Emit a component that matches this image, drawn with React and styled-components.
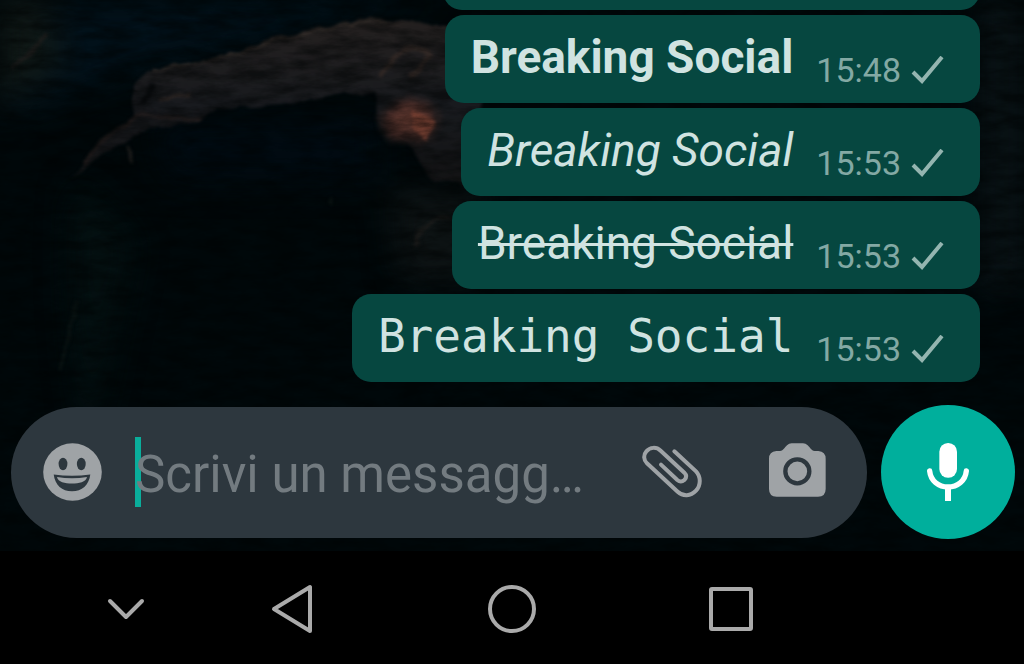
import React from 'react';
import styled, { createGlobalStyle } from 'styled-components';

const GlobalStyle = createGlobalStyle`
  *, *::before, *::after { box-sizing: border-box; }
  html, body { margin: 0; background: #000; }
  body, button, input { font-family: Roboto, "Liberation Sans", sans-serif; }
`;

const Screen = styled.div`
  display: flex;
  flex-direction: column;
  height: 100vh;
  overflow: hidden;
  background: #000;
`;

const Chat = styled.main`
  position: relative;
  isolation: isolate;
  display: flex;
  flex-direction: column;
  flex: 1;
  min-height: 0;
  background: #000a0c;
`;

const WallpaperArt = styled.svg`
  position: absolute;
  inset: 0;
  z-index: -1;
  width: 100%;
  height: 100%;
`;

const Messages = styled.section`
  display: flex;
  flex: 1;
  flex-direction: column;
  align-items: flex-end;
  justify-content: flex-end;
  gap: 5px;
  min-height: 0;
  padding: 0 44px;
  overflow: hidden;
`;

const Bubble = styled.article`
  display: flex;
  flex-shrink: 0;
  align-items: flex-start;
  gap: 23px;
  min-height: 88px;
  padding: 15px 36px 13px 26px;
  border-radius: 19px;
  background: #064740;
`;

const EarlierBubble = styled(Bubble)`
  width: 537px;
`;

const MessageText = styled.span`
  color: #d0e3e1;
  font-family: ${(p) => (p.$mono ? '"DejaVu Sans Mono", monospace' : 'inherit')};
  font-size: 46px;
  font-style: ${(p) => (p.$italic ? 'italic' : 'normal')};
  font-weight: ${(p) => (p.$bold ? 700 : 400)};
  line-height: 54px;
  text-decoration: ${(p) => (p.$strike ? 'line-through' : 'none')};
  text-decoration-thickness: 3px;
  white-space: nowrap;
`;

const Meta = styled.span`
  display: flex;
  align-items: center;
  align-self: flex-end;
  gap: 10px;
  color: #83a9a4;
  font-size: 34px;
  line-height: 40px;
`;

const Composer = styled.form`
  display: flex;
  align-items: center;
  gap: 14px;
  padding: 23px 9px 12px 11px;
`;

const InputPill = styled.div`
  display: flex;
  flex: 1;
  align-items: center;
  min-width: 0;
  height: 131px;
  padding: 0 41px 0 32px;
  border-radius: 66px;
  background: #2d373e;
`;

const IconButton = styled.button`
  display: grid;
  flex-shrink: 0;
  place-items: center;
  padding: 0;
  border: 0;
  background: none;
  color: ${(p) => p.$tint || '#9fa3a6'};
`;

const Field = styled.label`
  position: relative;
  display: flex;
  flex: 1;
  align-items: center;
  min-width: 0;
  height: 70px;
  margin: 0 34px 0 33px;
`;

const Caret = styled.span`
  position: absolute;
  left: 0;
  width: 6px;
  height: 70px;
  background: #0aad9b;
`;

const MessageInput = styled.input`
  position: relative;
  width: 100%;
  height: 66px;
  padding: 4px 0 0;
  border: 0;
  outline: 0;
  background: transparent;
  color: #d0e3e1;
  font-size: 51px;
  text-overflow: ellipsis;
  &::placeholder { color: #737b80; opacity: 1; }
`;

const Actions = styled.div`
  display: flex;
  align-items: center;
  gap: 67px;
`;

const MicButton = styled(IconButton)`
  width: 134px;
  height: 134px;
  border-radius: 50%;
  background: #00af9c;
`;

const NavBar = styled.nav`
  display: grid;
  grid-template-columns: 68fr 115fr 219fr 219fr 219fr 184fr;
  height: 113px;
  padding-top: 3px;
  background: #000;
`;

const NavButton = styled(IconButton)`
  &:first-child { grid-column: 2; }
`;

const messages = [
  { time: '15:48', bold: true },
  { time: '15:53', italic: true },
  { time: '15:53', strike: true },
  { time: '15:53', mono: true },
];

function Wallpaper() {
  return (
    <WallpaperArt viewBox="0 0 1024 551" preserveAspectRatio="xMidYMid slice" aria-hidden="true">
      <defs>
        <filter id="rough" x="-10%" y="-10%" width="120%" height="120%" colorInterpolationFilters="sRGB">
          <feTurbulence type="fractalNoise" baseFrequency="0.045" numOctaves="4" seed="4" result="n" />
          <feDisplacementMap in="SourceGraphic" in2="n" scale="10" xChannelSelector="R" yChannelSelector="G" result="d" />
          <feGaussianBlur in="d" stdDeviation="1.5" />
        </filter>
        <filter id="haze" x="-30%" y="-30%" width="160%" height="160%" colorInterpolationFilters="sRGB">
          <feGaussianBlur stdDeviation="16" />
        </filter>
        <filter id="grain" x="0" y="0" width="100%" height="100%" colorInterpolationFilters="sRGB">
          <feTurbulence type="fractalNoise" baseFrequency="0.03 0.1" numOctaves="5" seed="9" />
          <feColorMatrix values="0 0 0 0 0  0 0 0 0 0.01  0 0 0 0 0.01  2.2 0 0 0 -0.7" />
        </filter>
        <linearGradient id="rock" x1="0" y1="0" x2="0" y2="1">
          <stop offset="0" stopColor="#24201f" />
          <stop offset="0.5" stopColor="#181a1e" />
          <stop offset="1" stopColor="#121213" />
        </linearGradient>
        <radialGradient id="glow">
          <stop offset="0" stopColor="#663a30" />
          <stop offset="0.6" stopColor="#442a26" />
          <stop offset="1" stopColor="#2b2322" stopOpacity="0" />
        </radialGradient>
      </defs>
      <rect width="1024" height="551" fill="#00080a" />
      <g filter="url(#haze)">
        <path d="M0 0H450L270 38 140 68 70 95 0 120Z" fill="#02111a" />
        <path d="M0 0H48L62 65 0 108Z" fill="#101917" />
        <path d="M75 180Q62 300 90 450L135 240Z" fill="#041112" />
        <path d="M390 190H480V280H400Z" fill="#0e1415" />
        <path d="M980 0H1024V290H980Z" fill="#0a1316" />
        <path d="M150 120H380V180H170Z" fill="#010b12" />
      </g>
      <g filter="url(#rough)">
        <path d="M134 84 155 70 240 52 285 34 375 18 480 30V190L435 180 412 152 378 120 374 94 330 97 280 104 215 109 200 122 160 128 135 135 70 178 100 146 134 118Z" fill="url(#rock)" />
        <path d="M82 165Q112 128 140 116L202 120" fill="none" stroke="#2b211f" strokeWidth="4" opacity="0.7" />
        <path d="M155 70 240 54 285 36 375 20 400 24" fill="none" stroke="#37302c" strokeWidth="2" />
        <path d="M418 245Q425 212 452 218M128 145 132 165M10 70 48 34" fill="none" stroke="#1c1c1b" strokeWidth="4" />
        <path d="M380 76Q402 35 430 56L410 78" fill="none" stroke="#302724" strokeWidth="5" />
        <path d="M145 106 154 84" fill="none" stroke="#0c0e11" strokeWidth="5" />
        <path d="M158 100 190 92" fill="none" stroke="#3a2e29" strokeWidth="2" />
        <ellipse cx="410" cy="121" rx="36" ry="29" fill="url(#glow)" />
        <path d="M412 110 437 121 427 139 413 132Z" fill="#8a4938" opacity="0.7" />
        <path d="M327 205 332 198M60 370 78 300" fill="none" stroke="#0b1514" strokeWidth="3" />
      </g>
      <rect width="1024" height="551" filter="url(#grain)" opacity="0.5" />
    </WallpaperArt>
  );
}

function CheckIcon() {
  return (
    <svg width="33" height="28" viewBox="0 0 33 28" fill="none" stroke="#94b5b0" strokeWidth="4" aria-hidden="true">
      <path d="M2 16 11 25 31 1" />
    </svg>
  );
}

function SmileIcon() {
  return (
    <svg width="59" height="58" viewBox="0 0 59 58" aria-hidden="true">
      <ellipse cx="29.500" cy="29" rx="29.300" ry="28.800" fill="currentColor" />
      <g fill="#2d373e">
        <ellipse cx="20" cy="21" rx="4.400" ry="6.200" />
        <ellipse cx="38.300" cy="21" rx="4.400" ry="6.200" />
        <path d="M10.700 31.400Q29 34 47.300 31.400C46 42 39 48.200 29 48.200S12 42 10.700 31.400Z" />
      </g>
      <path d="M14 34Q29 36.500 44 34C43 39 36 40.500 29 40.500S15 39 14 34Z" fill="currentColor" />
    </svg>
  );
}

function ClipIcon() {
  return (
    <svg width="60" height="54" viewBox="123 167 180 162" fill="none" stroke="currentColor" strokeWidth="12" strokeLinecap="round" aria-hidden="true">
      <path d="M220 186 285 246C300 262 300 288 285 304C269 321 246 322 230 307L138 222C127 211 127 196 136 186C147 173 166 172 179 184L250 250C258 258 256 266 250 272C243 278 236 278 229 272L180 226" />
    </svg>
  );
}

function CameraIcon() {
  return (
    <svg width="57" height="59" viewBox="506 157 171 177" aria-hidden="true">
      <path d="M528 181H539C550 180 552 171 560 164Q566 158 574 158H608Q616 158 622 164C630 171 632 180 643 181H654Q676 183 676 204V295Q676 318 653 318H529Q506 318 506 295V204Q506 183 528 181Z" fill="currentColor" />
      <circle cx="591" cy="242" r="36" fill="none" stroke="#2d373e" strokeWidth="13" />
    </svg>
  );
}

function MicIcon() {
  return (
    <svg width="42" height="58" viewBox="982 161 126 174" fill="none" stroke="currentColor" aria-hidden="true">
      <rect x="1019" y="161" width="53" height="104" rx="26" fill="currentColor" stroke="none" />
      <path d="M990 245C993 275 1017 293 1045 293S1097 275 1100 245" strokeWidth="16" strokeLinecap="round" />
      <path d="M1045 294V335" strokeWidth="18" />
    </svg>
  );
}

function NavIcon({ children }) {
  return (
    <svg width="50" height="50" viewBox="0 0 50 50" fill="none" stroke="#aaa" strokeWidth="4" strokeLinejoin="round" strokeLinecap="round" aria-hidden="true">
      {children}
    </svg>
  );
}

export default function App() {
  return (
    <>
      <GlobalStyle />
      <Screen>
        <Chat>
          <Wallpaper />
          <Messages aria-label="Messaggi">
            <EarlierBubble aria-hidden="true" />
            {messages.map((m, i) => (
              <Bubble key={i}>
                <MessageText $bold={m.bold} $italic={m.italic} $strike={m.strike} $mono={m.mono}>
                  Breaking Social
                </MessageText>
                <Meta>
                  <time>{m.time}</time>
                  <CheckIcon />
                </Meta>
              </Bubble>
            ))}
          </Messages>
          <Composer onSubmit={(e) => e.preventDefault()}>
            <InputPill>
              <IconButton type="button" aria-label="Emoji"><SmileIcon /></IconButton>
              <Field>
                <Caret />
                <MessageInput type="text" aria-label="Scrivi un messaggio" placeholder="Scrivi un messagg…" />
              </Field>
              <Actions>
                <IconButton type="button" aria-label="Allega"><ClipIcon /></IconButton>
                <IconButton type="button" aria-label="Fotocamera"><CameraIcon /></IconButton>
              </Actions>
            </InputPill>
            <MicButton type="button" aria-label="Messaggio vocale" $tint="#fff"><MicIcon /></MicButton>
          </Composer>
        </Chat>
        <NavBar aria-label="Navigazione">
          <NavButton type="button" aria-label="Nascondi tastiera"><NavIcon><path d="M9 17 25 33 41 17" /></NavIcon></NavButton>
          <NavButton type="button" aria-label="Indietro"><NavIcon><path d="M42 3V47L6 25Z" /></NavIcon></NavButton>
          <NavButton type="button" aria-label="Home"><NavIcon><circle cx="25" cy="25" r="22" /></NavIcon></NavButton>
          <NavButton type="button" aria-label="App recenti"><NavIcon><rect x="5" y="5" width="40" height="40" rx="1" /></NavIcon></NavButton>
        </NavBar>
      </Screen>
    </>
  );
}
